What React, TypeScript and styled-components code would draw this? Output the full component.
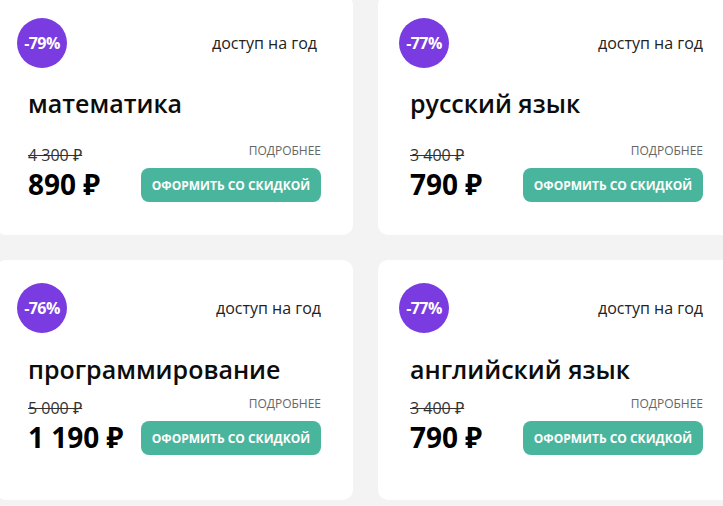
import React from "react";
import styled, { createGlobalStyle } from "styled-components";

const Global = createGlobalStyle`
  html, body { margin: 0; padding: 0; background: #f3f3f3; }
  body { font-family: "Open Sans", "Noto Sans", sans-serif; overflow: hidden; }
`;

const Grid = styled.div`
  display: grid;
  grid-template-columns: 357px 357px;
  grid-auto-rows: 240px;
  column-gap: 25px;
  row-gap: 25px;
  margin: -5px 0 0 -4px;
`;

const Card = styled.div`
  background: #fff;
  border-radius: 10px;
  padding: 23px 32px 0 32px;
  display: flex;
  flex-direction: column;
  box-sizing: border-box;
`;

const Header = styled.div`
  display: flex;
  align-items: center;
  justify-content: space-between;
  height: 50px;
`;

const Badge = styled.div`
  width: 50px;
  height: 50px;
  border-radius: 50%;
  background: #7a3be0;
  color: #fff;
  font-weight: 700;
  font-size: 16px;
  letter-spacing: -0.6px;
  display: flex;
  align-items: center;
  justify-content: center;
  margin-left: -11px;
`;

const Access = styled.span<{ $shift: number }>`
  font-size: 16px;
  color: #222;
  margin-right: ${(p) => p.$shift}px;
`;

const Title = styled.div<{ $top: number }>`
  margin-top: ${(p) => p.$top}px;
  font-size: 25px;
  font-weight: 600;
  color: #0c0c0c;
  line-height: 33px;
`;

const PriceRow = styled.div<{ $gap: number }>`
  margin-top: ${(p) => p.$gap}px;
  display: flex;
  justify-content: space-between;
  align-items: flex-start;
`;

const Prices = styled.div`
  display: flex;
  flex-direction: column;
  padding-top: 1px;
`;

const OldPrice = styled.span`
  font-size: 16px;
  line-height: 22px;
  color: #333;
  text-decoration: line-through;
`;

const NewPrice = styled.span`
  font-size: 28px;
  font-weight: 700;
  line-height: 38px;
  color: #000;
  margin-top: -1px;
`;

const Actions = styled.div`
  display: flex;
  flex-direction: column;
  align-items: flex-end;
`;

const More = styled.span`
  font-size: 12px;
  line-height: 16px;
  color: #666;
`;

const Button = styled.button`
  margin-top: 9px;
  height: 34px;
  width: 180px;
  border: none;
  border-radius: 8px;
  background: #4ab59d;
  color: #fff;
  font-family: "Open Sans", "Noto Sans", sans-serif;
  font-weight: 700;
  font-size: 12px;
  padding: 0;
  cursor: pointer;
`;

type Item = {
  discount: string;
  title: string;
  oldPrice: string;
  price: string;
  titleTop: number;
  gap: number;
  accessShift: number;
};

const items: Item[] = [
  { discount: "-79%", title: "математика", oldPrice: "4 300 ₽", price: "890 ₽", titleTop: 19, gap: 23, accessShift: 4 },
  { discount: "-77%", title: "русский язык", oldPrice: "3 400 ₽", price: "790 ₽", titleTop: 19, gap: 23, accessShift: 0 },
  { discount: "-76%", title: "программирование", oldPrice: "5 000 ₽", price: "1 190 ₽", titleTop: 20, gap: 10, accessShift: 0 },
  { discount: "-77%", title: "английский язык", oldPrice: "3 400 ₽", price: "790 ₽", titleTop: 20, gap: 10, accessShift: 0 },
];

export default function App() {
  return (
    <>
      <Global />
      <Grid>
        {items.map((it) => (
          <Card key={it.title}>
            <Header>
              <Badge>{it.discount}</Badge>
              <Access $shift={it.accessShift}>доступ на год</Access>
            </Header>
            <Title $top={it.titleTop}>{it.title}</Title>
            <PriceRow $gap={it.gap}>
              <Prices>
                <OldPrice>{it.oldPrice}</OldPrice>
                <NewPrice>{it.price}</NewPrice>
              </Prices>
              <Actions>
                <More>ПОДРОБНЕЕ</More>
                <Button>ОФОРМИТЬ СО СКИДКОЙ</Button>
              </Actions>
            </PriceRow>
          </Card>
        ))}
      </Grid>
    </>
  );
}
